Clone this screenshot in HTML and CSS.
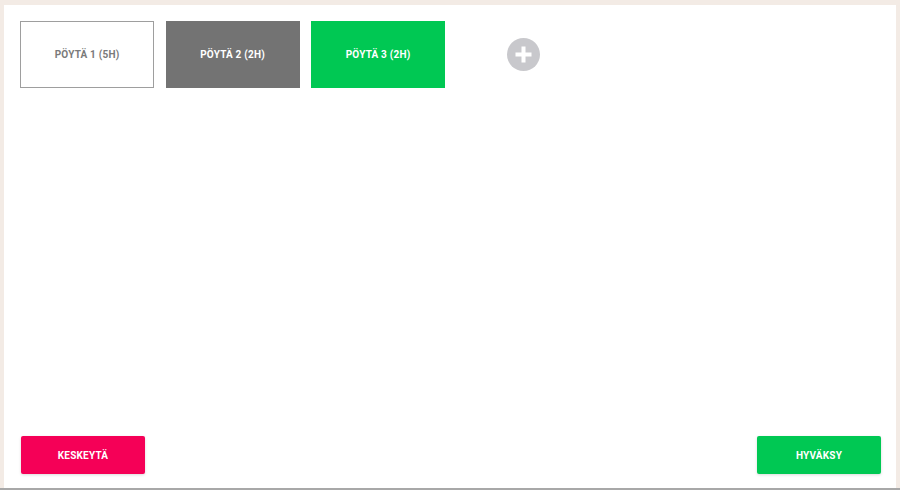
FILE: index.html
```html
<!DOCTYPE html>
<html lang="fi">
<head>
    <meta charset="UTF-8">
    <meta name="viewport" content="width=device-width, initial-scale=1.0">
    <title>Pöydät</title>
    <link rel="stylesheet" href="styles.css">
</head>
<body>
    <div class="panel">
        <ul class="table-list">
            <li class="table-card">Pöytä 1 (5h)</li>
            <li class="table-card busy">Pöytä 2 (2h)</li>
            <li class="table-card selected">Pöytä 3 (2h)</li>
            <li class="table-add">
                <button class="add-btn" title="Lisää pöytä">
                    <svg width="33" height="33" viewBox="0 0 33 33">
                        <circle cx="16.5" cy="16.5" r="16.5" fill="#c8c8cc"/>
                        <path d="M16.5 8.5v16M8.5 16.5h16" stroke="#fff" stroke-width="4"/>
                    </svg>
                </button>
            </li>
        </ul>

        <div class="actions">
            <button class="btn btn-cancel">Keskeytä</button>
            <button class="btn btn-ok">Hyväksy</button>
        </div>
    </div>
    <div class="bottom-bar"></div>
</body>
</html>
```

FILE: styles.css
```css
html, body {
    margin: 0;
    height: 100%;
}
body {
    font-family: Roboto, Arial, sans-serif;
    background-color: #f3ebe5;
    display: flex;
    flex-direction: column;
    overflow: hidden;
}
.panel {
    flex: 1;
    margin: 5px 4px 0 4px;
    background-color: #fff;
    display: flex;
    flex-direction: column;
    justify-content: space-between;
    padding: 16px 15px 14px 16px;
}
.table-list {
    display: flex;
    gap: 11.5px;
    list-style-type: none;
    margin: 0;
    padding: 0;
}
.table-card {
    box-sizing: border-box;
    width: 134px;
    height: 67px;
    display: flex;
    align-items: center;
    justify-content: center;
    font-size: 10px;
    font-weight: 700;
    letter-spacing: 0.2px;
    text-transform: uppercase;
    color: #7a7a7a;
    border: 1px solid #9e9e9e;
    background-color: #fff;
}
.table-card.busy {
    background-color: #737373;
    border-color: #737373;
    color: #fff;
}
.table-card.selected {
    background-color: #00c853;
    border-color: #00c853;
    color: #fff;
}
.table-add {
    width: 134px;
    height: 67px;
    display: flex;
    align-items: center;
    justify-content: center;
}
.add-btn {
    border: none;
    background: none;
    padding: 0;
    cursor: pointer;
    display: flex;
}
.actions {
    display: flex;
    justify-content: space-between;
    padding-left: 1px;
}
.btn {
    width: 124px;
    height: 38px;
    border: none;
    border-radius: 2px;
    color: #fff;
    font-family: Roboto, Arial, sans-serif;
    font-size: 10px;
    font-weight: 700;
    letter-spacing: 0.2px;
    text-transform: uppercase;
    cursor: pointer;
    box-shadow: 0 1px 3px rgba(0, 0, 0, 0.15);
}
.btn-cancel {
    background-color: #f50057;
}
.btn-ok {
    background-color: #00c853;
}
.bottom-bar {
    height: 2px;
    background-color: #a8a8a8;
}
```
